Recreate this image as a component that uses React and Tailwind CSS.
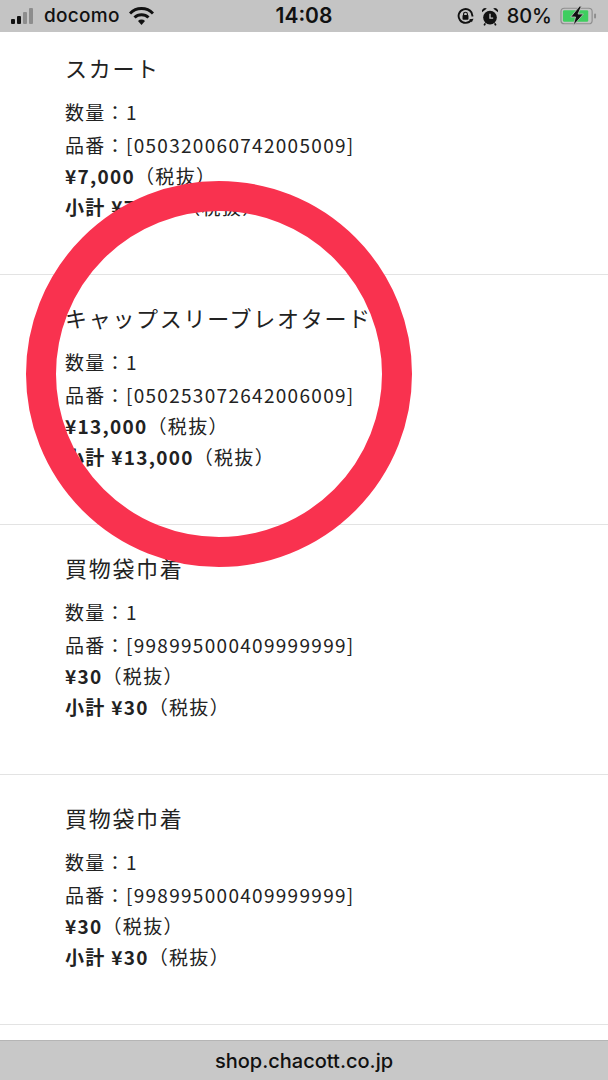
import React from 'react';

const items = [
  { name: 'スカート', code: '050320060742005009', price: '7,000', first: true },
  { name: 'キャップスリーブレオタード', code: '050253072642006009', price: '13,000' },
  { name: '買物袋巾着', code: '998995000409999999', price: '30' },
  { name: '買物袋巾着', code: '998995000409999999', price: '30' },
];

const Signal = () => (
  <svg width="28" height="16" viewBox="0 0 28 16" className="block">
    <rect x="0" y="11" width="4" height="5" rx="1" fill="#111" />
    <rect x="6" y="8" width="4" height="8" rx="1" fill="#111" />
    <rect x="12" y="4" width="4" height="12" rx="1" fill="#8d8d8d" />
    <rect x="18" y="0" width="4" height="16" rx="1" fill="#8d8d8d" />
  </svg>
);

const Wifi = () => (
  <svg width="25" height="18" viewBox="0 0 25 18" className="block">
    <path d="M1 6.5 A16 16 0 0 1 24 6.5" fill="none" stroke="#111" strokeWidth="3" />
    <path d="M5.5 10.5 A10 10 0 0 1 19.5 10.5" fill="none" stroke="#111" strokeWidth="3" />
    <path d="M9 14 L12.5 18 L16 14 A5 5 0 0 0 9 14 Z" fill="#111" />
  </svg>
);

const RotationLock = () => (
  <svg width="17" height="17" viewBox="0 0 16 16" className="block">
    <path d="M13.5 11 A6.5 6.5 0 1 1 14.5 8" fill="none" stroke="#111" strokeWidth="1.8" />
    <path d="M11.5 10.5 L15.5 10 L14 13.5 Z" fill="#111" />
    <rect x="5.2" y="6.5" width="5.6" height="4.5" rx="0.8" fill="#111" />
    <path d="M6.2 7 V5.8 A1.8 1.8 0 0 1 9.8 5.8 V7" fill="none" stroke="#111" strokeWidth="1.1" />
  </svg>
);

const Alarm = () => (
  <svg width="18" height="19" viewBox="0 0 17 18" className="block">
    <circle cx="8.5" cy="10" r="6.5" fill="#111" />
    <path d="M1 5 A3 3 0 0 1 5.5 1.5 Z M16 5 A3 3 0 0 0 11.5 1.5 Z" fill="#111" />
    <path d="M8.5 6.5 V10.5 H11.5" fill="none" stroke="#c4c4c4" strokeWidth="1.3" />
    <path d="M4 15.5 L3 17.5 M13 15.5 L14 17.5" stroke="#111" strokeWidth="1.6" />
  </svg>
);

const Battery = () => (
  <svg width="37" height="20" viewBox="0 0 38 20" className="block">
    <rect x="1" y="2" width="32" height="16" rx="3.5" fill="none" stroke="#8e8e8e" strokeWidth="1.2" />
    <rect x="3" y="4" width="26" height="12" rx="1.5" fill="#3fce5f" />
    <rect x="35" y="7.5" width="2" height="5" rx="1" fill="#8e8e8e" />
    <path d="M20 0 L11 11 H16 L13.5 20 L24 8 H18.5 L22 0 Z" fill="#111" stroke="#c4c4c4" strokeWidth="0.8" />
  </svg>
);

const Item = ({ item }) => (
  <div className={`border-b border-[#e3e3e3] pl-[65px] text-[#222] ${item.first ? 'h-[243px] pt-[17px]' : 'h-[250px] pt-[24px]'}`}>
    <h2 className="h-[36px] text-[22px] leading-[36px] tracking-[1.7px] font-normal whitespace-nowrap">{item.name}</h2>
    <div className="mt-[11px] text-[19px] leading-[31px] tracking-[1.3px]">
      <p className="h-[33px]">数量：1</p>
      <p className="h-[31px] whitespace-nowrap">品番：[{item.code}]</p>
      <p className="h-[31px]"><b className="font-bold">¥{item.price}</b>（税抜）</p>
      <p className="h-[31px]"><b className="font-bold">小計 ¥{item.price}</b>（税抜）</p>
    </div>
  </div>
);

export default function App() {
  return (
    <div className="relative flex h-[1080px] w-[608px] flex-col overflow-hidden bg-white font-['Noto_Sans_CJK_JP','Noto_Sans',sans-serif]">
      <header className="grid h-[32px] shrink-0 grid-cols-[1fr_auto_1fr] items-center bg-[#c4c4c4] pl-[11px] pr-[11px] font-['Inter','Liberation_Sans',sans-serif] text-[#111]">
        <div className="flex items-center">
          <Signal />
          <span className="ml-[5px] text-[19px] font-medium tracking-[0.3px]">docomo</span>
          <span className="ml-[9px]"><Wifi /></span>
        </div>
        <span className="text-[21px] font-semibold">14:08</span>
        <div className="flex items-center justify-end">
          <RotationLock />
          <span className="ml-[7px]"><Alarm /></span>
          <span className="ml-[8px] text-[20px] font-medium">80%</span>
          <span className="ml-[8px]"><Battery /></span>
        </div>
      </header>

      <main className="flex-1 overflow-hidden">
        {items.map((item, i) => <Item key={i} item={item} />)}
      </main>

      <footer className="flex h-[40px] shrink-0 items-center justify-center border-t border-[#b5b5b5] bg-[#c8c8c8] font-['Inter','Liberation_Sans',sans-serif] text-[20px] font-medium text-[#111]">
        shop.chacott.co.jp
      </footer>

      {/* annotation ring drawn over the screenshot */}
      <div className="absolute left-[26px] top-[181px] h-[386px] w-[386px] rounded-full border-[30px] border-[#f9324f]" />
    </div>
  );
}
